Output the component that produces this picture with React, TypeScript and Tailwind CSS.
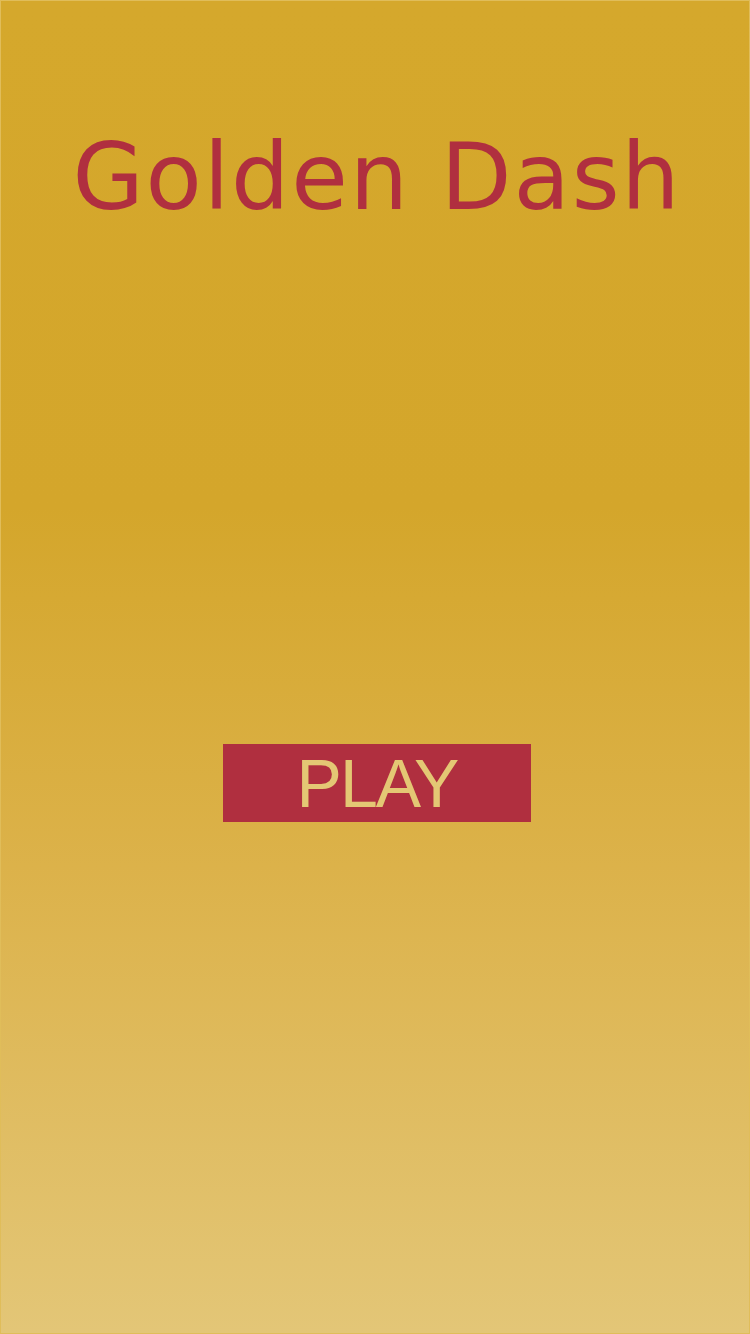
import React from 'react';

export default function App() {
  return (
    <div className="w-[750px] h-[1334px] border border-[#e0bd5a] pl-[4px] bg-[linear-gradient(to_bottom,#d5a82c_0%,#d4a62b_38%,#dcb24a_65%,#e3c677_100%)] flex flex-col items-center">
      <h1 className="mt-[127px] text-[92px] leading-[100px] text-[#b02f3f] tracking-[1.8px] font-['DejaVu_Sans',sans-serif]">
        Golden Dash
      </h1>
      <button className="mt-[516px] w-[308px] h-[78px] bg-[#b02f3f] text-[#e4c774] text-[68px] leading-none tracking-[-2px] flex items-center justify-center font-['Liberation_Sans',Arial,sans-serif]">
        PLAY
      </button>
    </div>
  );
}
